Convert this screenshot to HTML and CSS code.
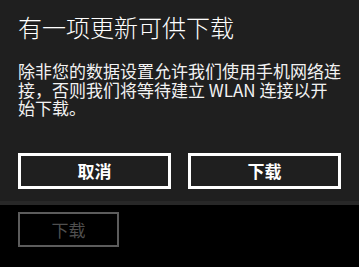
FILE: index.html
```html
<!DOCTYPE html>
<html lang="zh-CN">
<head>
    <meta charset="UTF-8">
    <meta name="viewport" content="width=device-width, initial-scale=1.0">
    <title>有一项更新可供下载</title>
    <link rel="stylesheet" href="styles.css">
</head>
<body>

    <div class="dialog">
        <h1 class="title">有一项更新可供下载</h1>
        <p class="message">除非您的数据设置允许我们使用手机网络连接，否则我们将等待建立 WLAN 连接以开始下载。</p>
        <div class="actions">
            <button class="btn">取消</button>
            <button class="btn">下载</button>
        </div>
    </div>

    <div class="page">
        <button class="btn-disabled" disabled>下载</button>
    </div>

</body>
</html>
```

FILE: styles.css
```css
body {
    margin: 0;
    background-color: #000;
    color: #fff;
    font-family: "Noto Sans CJK SC", "Noto Sans", sans-serif;
}
.dialog {
    background-color: #1f1f1f;
    height: 205px;
    box-sizing: border-box;
    padding: 12px 0 0 18px;
    border-bottom: 4px solid #282828;
}
.title {
    margin: 0;
    font-size: 24px;
    font-weight: 300;
    line-height: 30px;
}
.message {
    width: 324px;
    margin: 20px 0 0;
    font-size: 17px;
    line-height: 18.5px;
    color: #f2f2f2;
}
.actions {
    display: flex;
    gap: 17px;
    margin-top: 35px;
}
.btn {
    width: 153px;
    height: 36px;
    background: transparent;
    border: 3px solid #fff;
    color: #fff;
    font-family: inherit;
    font-size: 17px;
    font-weight: bold;
    padding: 0;
}
.page {
    padding: 7px 0 0 18px;
}
.btn-disabled {
    width: 101px;
    height: 35px;
    background: transparent;
    border: 2px solid #5c5c5c;
    color: #4f4f4f;
    font-family: inherit;
    font-size: 17px;
    padding: 0;
}
```
